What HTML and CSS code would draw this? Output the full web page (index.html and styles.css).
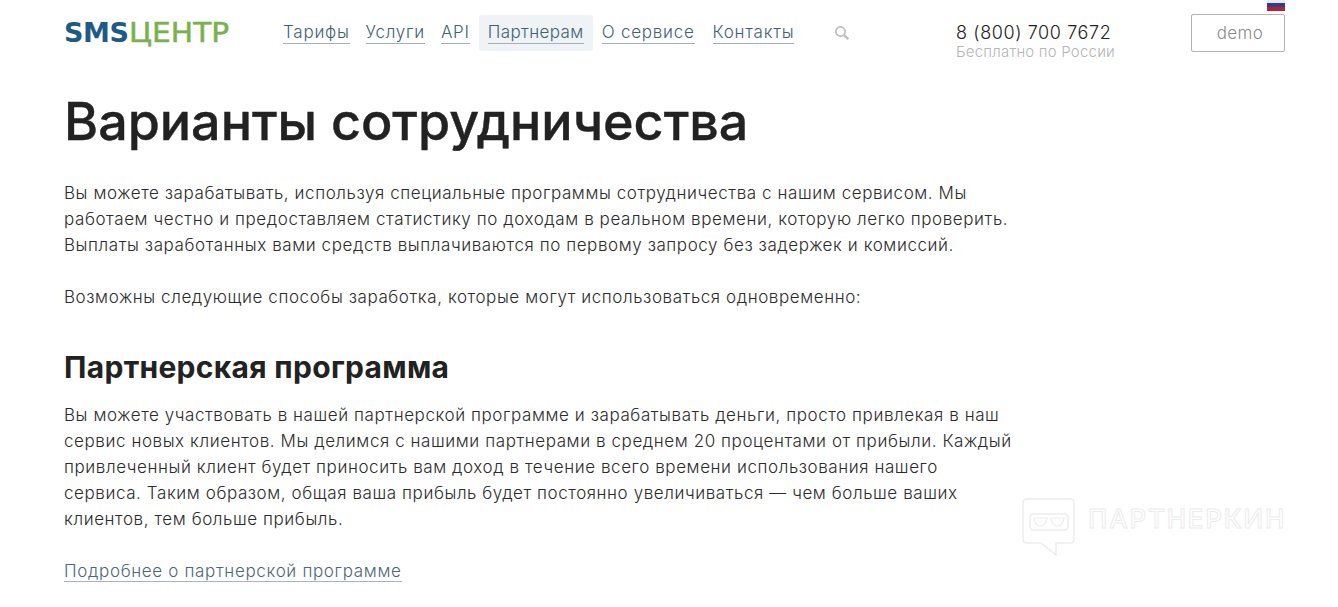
FILE: index.html
```html
<!DOCTYPE html>
<html lang="ru">
<head>
<meta charset="utf-8">
<title>Варианты сотрудничества</title>
<link rel="stylesheet" href="styles.css">
</head>
<body>
<div class="page">
  <header class="header">
    <a class="logo"><span class="logo-sms">SMS</span><span class="logo-center">ЦЕНТР</span></a>
    <nav class="nav">
      <a class="nav-item"><span class="nav-link">Тарифы</span></a>
      <a class="nav-item"><span class="nav-link">Услуги</span></a>
      <a class="nav-item"><span class="nav-link">API</span></a>
      <a class="nav-item nav-item-active"><span class="nav-link">Партнерам</span></a>
      <a class="nav-item"><span class="nav-link">О сервисе</span></a>
      <a class="nav-item nav-item-last"><span class="nav-link">Контакты</span></a>
    </nav>
    <svg class="search" viewBox="0 0 14 14" width="14" height="14"><circle cx="5.5" cy="5.5" r="4.6" fill="none" stroke="#bdbdbd" stroke-width="1.7"/><path d="M9 9L13.2 13.2" stroke="#bdbdbd" stroke-width="2.4"/></svg>
    <div class="phone">
      <div class="phone-num">8 (800) 700 7672</div>
      <div class="phone-note">Бесплатно по России</div>
    </div>
    <a class="demo">demo</a>
    <div class="flag"><i class="flag-w"></i><i class="flag-b"></i><i class="flag-r"></i></div>
  </header>
  <main class="content">
    <h1 class="title">Варианты сотрудничества</h1>
    <p class="text">Вы можете зарабатывать, используя специальные программы сотрудничества с нашим сервисом. Мы<br>работаем честно и предоставляем статистику по доходам в реальном времени, которую легко проверить.<br>Выплаты заработанных вами средств выплачиваются по первому запросу без задержек и комиссий.</p>
    <p class="text">Возможны следующие способы заработка, которые могут использоваться одновременно:</p>
    <h2 class="subtitle">Партнерская программа</h2>
    <p class="text">Вы можете участвовать в нашей партнерской программе и зарабатывать деньги, просто привлекая в наш<br>сервис новых клиентов. Мы делимся с нашими партнерами в среднем 20 процентами от прибыли. Каждый<br>привлеченный клиент будет приносить вам доход в течение всего времени использования нашего<br>сервиса. Таким образом, общая ваша прибыль будет постоянно увеличиваться — чем больше ваших<br>клиентов, тем больше прибыль.</p>
    <p class="text"><a class="more">Подробнее о партнерской программе</a></p>
  </main>
  <div class="watermark">
    <svg class="wm-icon" viewBox="0 0 54 58" width="54" height="58"><path d="M5 1H48Q52 1 52 5V41Q52 45 48 45H34V57L19 45H5Q1 45 1 41V5Q1 1 5 1Z" fill="none" stroke="#ededed" stroke-width="1.5"/><path d="M11 16H43Q46 16 46 20V28Q46 32 43 32H11Q8 32 8 28V20Q8 16 11 16Z" fill="none" stroke="#ededed" stroke-width="1.5"/><path d="M12 20H25Q24 28 18 28Q13 28 12 20ZM29 20H42Q41 28 35 28Q30 28 29 20Z" fill="none" stroke="#ededed" stroke-width="1.2"/></svg>
    <span class="wm-text">ПАРТНЕРКИН</span>
  </div>
</div>
</body>
</html>
```
FILE: styles.css
```css
* { box-sizing: border-box; }
html, body { margin: 0; padding: 0; background: #fff; }
body { font-family: "Inter", "Noto Sans", sans-serif; color: #2a2a2a; height: 607px; overflow: hidden; }
a { cursor: pointer; }
.page { position: relative; width: 1338px; height: 607px; padding: 0 53px 0 65px; }
.header { position: relative; display: flex; align-items: flex-start; height: 66px; }
.logo { display: flex; font-family: "DejaVu Sans", sans-serif; font-size: 27px; line-height: 24px; margin: 21px 0 0 -1px; width: 211px; }
.logo-sms { color: #1d5a86; font-weight: 700; letter-spacing: -0.4px; }
.logo-center { display: inline-block; color: #7bb04f; font-weight: 400; transform: scaleX(1.1); transform-origin: left center; -webkit-text-stroke: 0.5px #7bb04f; }
.nav { display: flex; margin-top: 15px; width: 551px; }
.nav-item { display: block; height: 36px; padding: 7px 8px 0; border-radius: 3px; }
.nav-item-active { background: #eff3f6; margin: 0 1px; padding: 7px 9px 0; }
.nav-item-active .nav-link { letter-spacing: 0.4px; }
.nav-item-last { margin-left: 2px; }
.nav-link { font-size: 17px; font-weight: 300; letter-spacing: 0.75px; color: #3f6273; line-height: 20px; border-bottom: 1px solid #9db2bd; display: inline-block; height: 22px; }
.search { margin-top: 26px; margin-left: 9px; }
.phone { margin-left: 107px; margin-top: 23px; }
.phone-num { font-size: 18px; line-height: 20px; font-weight: 300; letter-spacing: 0.6px; color: #222; }
.phone-note { font-size: 15px; line-height: 18px; font-weight: 300; letter-spacing: 0.2px; color: #b5b5b5; }
.demo { display: block; width: 94px; height: 38px; margin: 14px 0 0 auto; border: 1px solid #b4b4b4; border-radius: 2px; text-align: center; line-height: 36px; font-size: 17px; font-weight: 300; letter-spacing: 0.4px; color: #8a8a8a; padding-left: 4px; }
.flag { position: absolute; right: 0; top: 0; width: 18px; height: 11px; display: flex; flex-direction: column; }
.flag i { display: block; height: 4px; }
.flag-w { background: #e8e8ee; height: 3px !important; }
.flag-b { background: #2f3f86; }
.flag-r { background: #b3203a; }
.content { width: 960px; margin-left: -1px; }
.title { font-size: 52px; line-height: 60px; font-weight: 500; color: #222; -webkit-text-stroke: 0.4px #222; margin: 26px 0 0; }
.text { font-size: 17px; line-height: 26px; font-weight: 300; letter-spacing: 0.58px; color: #2c2c2c; margin: 0 0 26px; white-space: nowrap; }
.title + .text { margin-top: 28px; }
.subtitle { font-size: 30px; line-height: 36px; font-weight: 700; letter-spacing: 0.3px; color: #222; margin: 39px 0 17px; }
.more { color: #4b6878; border-bottom: 1px solid #a3b6c0; letter-spacing: 0.66px; }
.watermark { position: absolute; left: 1022px; top: 498px; display: flex; }
.wm-icon { display: block; }
.wm-text { font-size: 26px; line-height: 26px; margin: 8px 0 0 12px; color: #fff; -webkit-text-stroke: 1px #ececec; font-weight: 500; letter-spacing: 1.8px; }
```
